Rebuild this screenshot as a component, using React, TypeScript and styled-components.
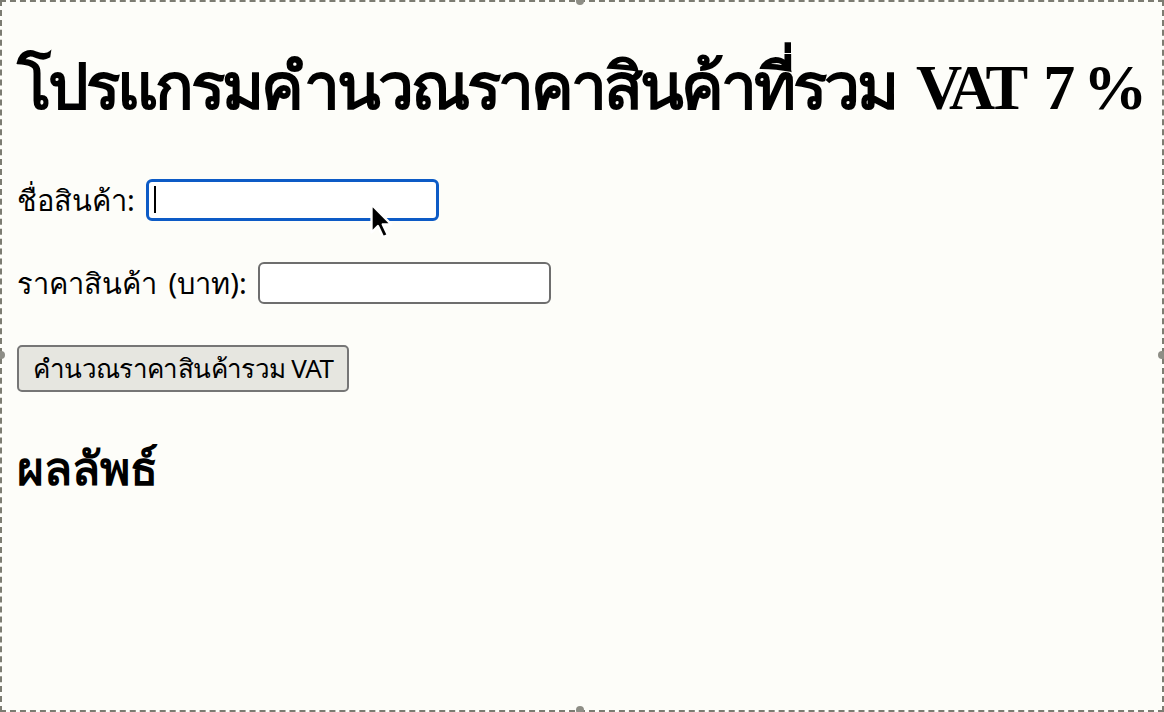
import React from 'react';
import styled, { createGlobalStyle } from 'styled-components';

const GlobalStyle = createGlobalStyle`
  html, body {
    margin: 0;
    padding: 0;
    background: #fdfdf9;
  }
  #root {
    min-height: 712px;
  }
`;

const Frame = styled.div`
  position: relative;
  width: 1164px;
  height: 712px;
  box-sizing: border-box;
  padding: 0 17px;
  overflow: hidden;
  font-family: "Noto Sans", "Liberation Sans", sans-serif;
  color: #000;
`;

const DashedEdge = styled.div`
  position: absolute;
  inset: 0;
  border: 2px dashed #7c7c72;
  pointer-events: none;
`;

const Handle = styled.div<{ $x: string; $y: string }>`
  position: absolute;
  left: ${p => p.$x};
  top: ${p => p.$y};
  width: 8px;
  height: 8px;
  margin: -4px 0 0 -4px;
  border-radius: 50%;
  background: #8e8e86;
`;

const Title = styled.h1`
  margin: 0;
  padding-top: 48px;
  font-family: "Liberation Serif", serif;
  font-size: 64px;
  font-weight: bold;
  line-height: 80px;
  white-space: nowrap;
  word-spacing: 4px;
`;

const ThaiPart = styled.span`
  letter-spacing: -3px;
`;

const LatinPart = styled.span<{ $spacing: number }>`
  letter-spacing: ${p => p.$spacing}px;
`;

const Form = styled.div`
  display: flex;
  flex-direction: column;
  align-items: flex-start;
  gap: 41px;
  margin-top: 51px;
`;

const Field = styled.div`
  display: flex;
  align-items: center;
  gap: 11px;
`;

const Label = styled.label`
  font-size: 29px;
  line-height: 42px;
  word-spacing: 4px;
`;

const InputWrap = styled.div`
  position: relative;
`;

const TextInput = styled.input<{ $focused?: boolean }>`
  box-sizing: border-box;
  width: 293px;
  height: 42px;
  padding: 0 8px;
  border: ${p => (p.$focused ? '3px solid #0d5bc6' : '2px solid #6e6e6e')};
  border-radius: 6px;
  background: #fff;
  font-size: 24px;
  outline: none;
`;

const Caret = styled.span`
  position: absolute;
  left: 8px;
  top: 7px;
  width: 2px;
  height: 27px;
  background: #000;
`;

const Button = styled.button`
  box-sizing: border-box;
  height: 47px;
  padding: 0 14px;
  border: 2px solid #767676;
  border-radius: 5px;
  background: #e6e6e0;
  font-family: "Noto Sans", "Liberation Sans", sans-serif;
  font-size: 26px;
  letter-spacing: -0.65px;
  color: #000;
`;

const Result = styled.h2`
  margin: 48px 0 0;
  font-family: "Liberation Serif", serif;
  font-size: 46px;
  font-weight: bold;
  line-height: 60px;
`;

const Pointer = styled.svg`
  position: absolute;
  left: 368px;
  top: 202px;
`;

export default function App() {
  return (
    <>
      <GlobalStyle />
      <Frame>
        <Title>
          <ThaiPart>โปรแกรมคำนวณราคาสินค้าที่รวม</ThaiPart> <LatinPart $spacing={-5}>VAT</LatinPart>{' '}
          <LatinPart $spacing={8}>7%</LatinPart>
        </Title>
        <Form>
          <Field>
            <Label htmlFor="name">ชื่อสินค้า:</Label>
            <InputWrap>
              <TextInput id="name" $focused />
              <Caret />
            </InputWrap>
          </Field>
          <Field>
            <Label htmlFor="price">ราคาสินค้า (บาท):</Label>
            <TextInput id="price" />
          </Field>
          <Button>คำนวณราคาสินค้ารวม VAT</Button>
        </Form>
        <Result>ผลลัพธ์</Result>
        <Pointer width="28" height="40" viewBox="0 0 24 34">
          <path
            d="M3 2 L3 26 L8.5 20.5 L13 30 L17 28.2 L12.6 19 L20 19 Z"
            fill="#000"
            stroke="#fff"
            strokeWidth="2"
            strokeLinejoin="round"
          />
        </Pointer>
        <DashedEdge />
        <Handle $x="580px" $y="1px" />
        <Handle $x="1px" $y="355px" />
        <Handle $x="1162px" $y="355px" />
        <Handle $x="580px" $y="710px" />
      </Frame>
    </>
  );
}
